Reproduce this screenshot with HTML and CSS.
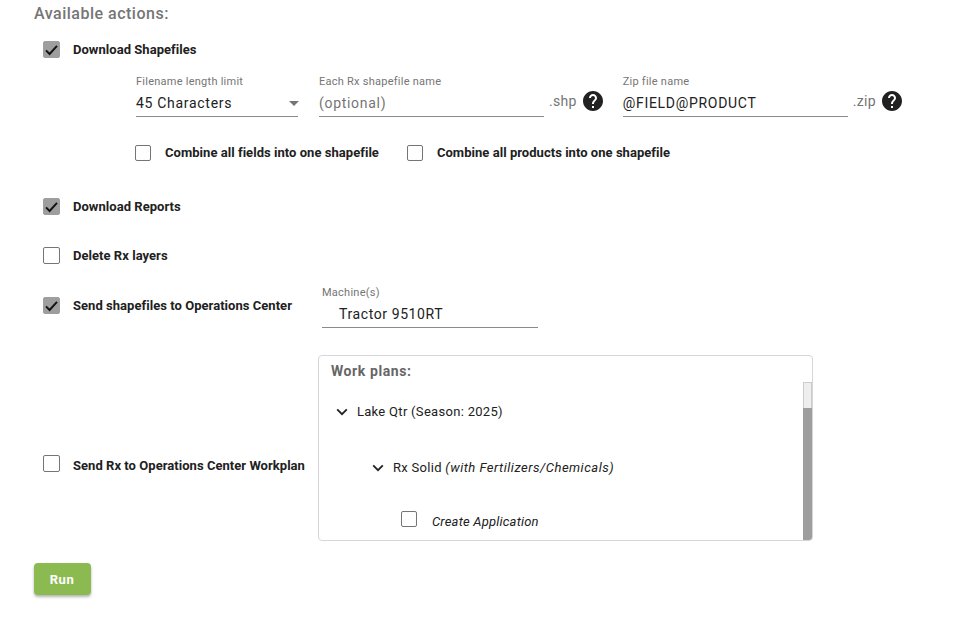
FILE: index.html
```html
<!DOCTYPE html>
<html lang="en">
<head>
	<title>Available actions</title>
	<meta charset="utf-8">
	<meta name="viewport" content="width=device-width, initial-scale=1">
	<link rel="stylesheet" href="styles.css">
</head>
<body>
	<svg class="defs" width="0" height="0" aria-hidden="true">
		<symbol id="help" viewBox="0 0 24 24">
			<path d="M12 2C6.48 2 2 6.48 2 12s4.48 10 10 10 10-4.48 10-10S17.52 2 12 2zm1 17h-2v-2h2v2zm2.07-7.75l-.9.92C13.45 12.9 13 13.5 13 15h-2v-.5c0-1.1.45-2.1 1.17-2.83l1.24-1.26c.37-.36.59-.86.59-1.41 0-1.1-.9-2-2-2s-2 .9-2 2H8c0-2.21 1.79-4 4-4s4 1.79 4 4c0 .88-.36 1.68-.93 2.25z"/>
		</symbol>
		<symbol id="chevron" viewBox="0 0 12 8">
			<path d="M1.2 1.4 6 6.2l4.800-4.800" fill="none" stroke="currentColor" stroke-width="1.800"/>
		</symbol>
		<symbol id="tick" viewBox="0 0 17 17">
			<path d="M3 9.300 6.600 13 14 4.800" fill="none" stroke="currentColor" stroke-width="1.900"/>
		</symbol>
	</svg>

	<main class="page">
		<h1 class="title">Available actions:</h1>

		<section class="action action-shapefiles">
			<span class="check checked"><svg><use href="#tick"/></svg></span>
			<span class="check-label">Download Shapefiles</span>
		</section>

		<section class="options">
			<div class="fields">
				<div class="field field-select">
					<label>Filename length limit</label>
					<div class="value">45 Characters<span class="caret"></span></div>
				</div>
				<div class="field field-name">
					<label>Each Rx shapefile name</label>
					<div class="value placeholder">(optional)</div>
				</div>
				<span class="suffix">.shp</span>
				<svg class="help"><use href="#help"/></svg>
				<div class="field field-name field-zip">
					<label>Zip file name</label>
					<div class="value">@FIELD@PRODUCT</div>
				</div>
				<span class="suffix">.zip</span>
				<svg class="help"><use href="#help"/></svg>
			</div>
			<div class="combine">
				<span class="check"></span>
				<span class="check-label">Combine all fields into one shapefile</span>
				<span class="check"></span>
				<span class="check-label">Combine all products into one shapefile</span>
			</div>
		</section>

		<section class="action action-reports">
			<span class="check checked"><svg><use href="#tick"/></svg></span>
			<span class="check-label">Download Reports</span>
		</section>

		<section class="action action-delete">
			<span class="check"></span>
			<span class="check-label">Delete Rx layers</span>
		</section>

		<section class="action action-send">
			<span class="check checked"><svg><use href="#tick"/></svg></span>
			<span class="check-label">Send shapefiles to Operations Center</span>
			<div class="field field-machine">
				<label>Machine(s)</label>
				<div class="value">Tractor 9510RT</div>
			</div>
		</section>

		<section class="action action-workplan">
			<span class="check"></span>
			<span class="check-label">Send Rx to Operations Center Workplan</span>
			<div class="panel">
				<h2 class="panel-title">Work plans:</h2>
				<div class="tree">
					<div class="tree-row tree-field">
						<svg class="chevron"><use href="#chevron"/></svg>
						<span>Lake Qtr (Season: 2025)</span>
					</div>
					<div class="tree-row tree-plan">
						<svg class="chevron"><use href="#chevron"/></svg>
						<span>Rx Solid <em>(with Fertilizers/Chemicals)</em></span>
					</div>
					<div class="tree-row tree-leaf">
						<span class="check"></span>
						<em>Create Application</em>
					</div>
				</div>
				<div class="scrollbar"><div class="scrollbar-thumb"></div></div>
			</div>
		</section>

		<button class="run">Run</button>
	</main>
</body>
</html>
```

FILE: styles.css
```css
* {
	box-sizing: border-box;
}

html, body {
	margin: 0;
	background-color: #fff;
	color: #212121;
	font-family: Roboto, sans-serif;
}

.defs {
	position: absolute;
}

.page {
	height: 635px;
	padding: 4px 0 0 34px;
	overflow: hidden;
}

.title {
	margin: 0;
	font-size: 16px;
	line-height: 19px;
	font-weight: 500;
	letter-spacing: 0.5px;
	color: #757575;
}

.action {
	display: flex;
	align-items: center;
	padding-left: 9px;
}

.action-shapefiles {
	margin-top: 18px;
}

.action-reports {
	margin-top: 37px;
}

.action-delete {
	margin-top: 32px;
}

.action-send {
	margin-top: 18px;
}

.action-workplan {
	margin-top: 27px;
}

.check {
	flex: none;
	display: block;
	width: 17px;
	height: 17px;
	border: 1px solid #757575;
	border-radius: 2px;
}

	.check.checked {
		background-color: #9e9e9e;
		border-color: #9e9e9e;
		color: #111;
	}

	.check svg {
		display: block;
		width: 17px;
		height: 17px;
		margin: -1px;
	}

.check-label {
	margin-left: 13px;
	font-size: 13px;
	font-weight: 700;
	line-height: 17px;
	letter-spacing: 0.04px;
	white-space: nowrap;
}

.options {
	padding-left: 102px;
	margin-top: 17px;
}

.fields {
	display: flex;
	align-items: flex-start;
}

.field label {
	display: block;
	font-size: 11px;
	line-height: 13px;
	letter-spacing: 0.25px;
	color: #757575;
}

.value {
	height: 29px;
	padding-top: 7px;
	border-bottom: 1px solid #8a8a8a;
	font-size: 14px;
	line-height: 17px;
	letter-spacing: 0.7px;
	white-space: nowrap;
}

.placeholder {
	color: #757575;
}

.field-select {
	width: 162px;
}

	.field-select .value {
		display: flex;
		justify-content: space-between;
		align-items: center;
		padding-top: 3px;
	}

.caret {
	width: 0;
	height: 0;
	margin-right: -1px;
	border-left: 5px solid transparent;
	border-right: 5px solid transparent;
	border-top: 5px solid #757575;
}

.field-name {
	width: 225px;
	margin-left: 21px;
}

.field-zip {
	margin-left: 18px;
}

.suffix {
	margin: 18px 0 0 5px;
	font-size: 14px;
	line-height: 17px;
	letter-spacing: 0.3px;
	color: #757575;
}

.help {
	flex: none;
	width: 24px;
	height: 24px;
	margin: 14px 0 0 4px;
	fill: #212121;
}

.combine {
	display: flex;
	align-items: center;
	margin: 27px 0 0 -1px;
}

	.combine .check {
		width: 16px;
		height: 16px;
	}

	.combine .check-label {
		margin-left: 14px;
	}

	.combine .check:nth-child(3) {
		margin-left: 28px;
	}

.field-machine {
	width: 216px;
	margin: 4px 0 0 30px;
}

	.field-machine .value {
		padding: 7px 0 0 17px;
		letter-spacing: 0.6px;
	}

.action-workplan > .check {
	margin-top: 30px;
}

.action-workplan > .check-label {
	margin-top: 35px;
}

.panel {
	position: relative;
	width: 495px;
	height: 186px;
	margin-left: 13px;
	border: 1px solid #d6d6d6;
	border-radius: 4px;
	overflow: hidden;
}

.panel-title {
	margin: 0;
	padding: 7px 0 0 12px;
	font-size: 14px;
	line-height: 16px;
	font-weight: 700;
	letter-spacing: 0.6px;
	color: #666;
}

.tree {
	font-size: 13px;
	line-height: 16px;
	letter-spacing: 0.3px;
}

.tree-row {
	display: flex;
	align-items: center;
	white-space: nowrap;
}

.tree-field {
	padding-left: 17px;
	margin-top: 25px;
}

.tree-plan {
	padding-left: 53px;
	margin-top: 40px;
}

	.tree-plan em {
		letter-spacing: 0.5px;
	}

.tree-leaf {
	align-items: flex-start;
	padding-left: 82px;
	margin-top: 35px;
}

	.tree-leaf .check {
		width: 16px;
		height: 16px;
	}

	.tree-leaf em {
		margin: 3px 0 0 15px;
		letter-spacing: 0.2px;
	}

.chevron {
	flex: none;
	width: 12px;
	height: 8px;
	margin-right: 9px;
	color: #212121;
}

.scrollbar {
	position: absolute;
	top: 26px;
	right: 0;
	bottom: 0;
	width: 9px;
	background-color: #9e9e9e;
}

.scrollbar-thumb {
	height: 26px;
	background-color: #eee;
	border: 1px solid #ccc;
	border-bottom: none;
}

.run {
	display: block;
	width: 57px;
	height: 32px;
	margin-top: 22px;
	padding: 0 1px 0 0;
	border: none;
	border-radius: 4px;
	background-color: #8bbb50;
	color: #fff;
	font-family: Roboto, sans-serif;
	font-size: 13px;
	font-weight: 700;
	letter-spacing: 0.6px;
	box-shadow: 0 2px 3px rgba(0,0,0,0.3);
}
```
